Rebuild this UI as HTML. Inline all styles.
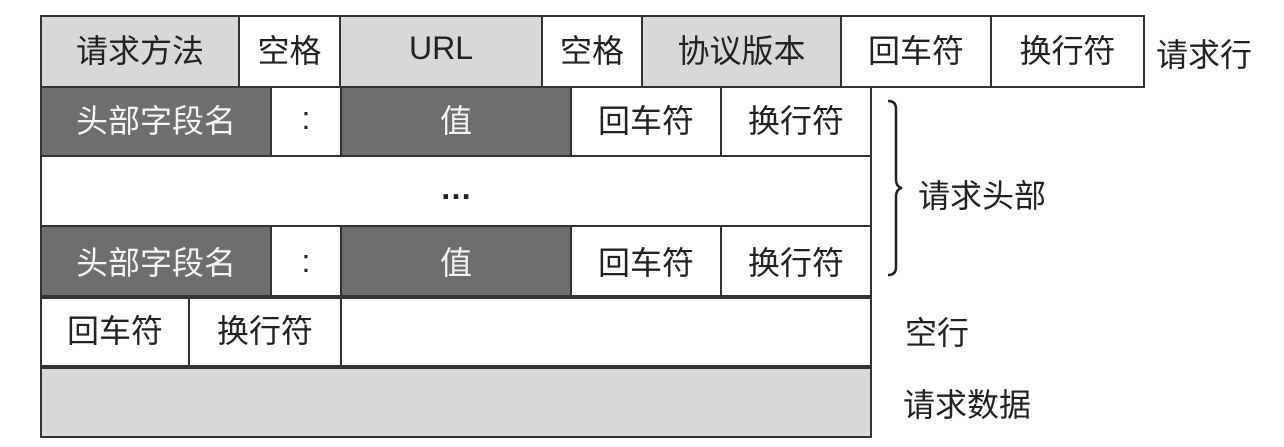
<!DOCTYPE html>
<html><head><meta charset="utf-8"><style>
body{margin:0;width:1284px;height:447px;background:#fff;position:relative;overflow:hidden;font-family:"Liberation Sans","Noto Sans CJK SC",sans-serif;color:#222}
.c{position:absolute;box-sizing:border-box;border:2px solid #333;display:flex;align-items:center;justify-content:center;font-size:32px;background:#fff;padding-bottom:6px}
.l{background:#d8d8d8}
.d{background:#6e6e6e;color:#f4f4f4}
.t{position:absolute;font-size:32px}
</style></head><body>
<div class="c l" style="left:40px;top:15px;width:200px;height:73px">请求方法</div>
<div class="c" style="left:238px;top:15px;width:103px;height:73px">空格</div>
<div class="c l" style="left:339px;top:15px;width:204px;height:73px">URL</div>
<div class="c" style="left:541px;top:15px;width:102px;height:73px">空格</div>
<div class="c l" style="left:641px;top:15px;width:201px;height:73px">协议版本</div>
<div class="c" style="left:840px;top:15px;width:152px;height:73px">回车符</div>
<div class="c" style="left:990px;top:15px;width:155px;height:73px">换行符</div>
<div class="t" style="left:1156px;top:30px">请求行</div>

<div class="c d" style="left:40px;top:86px;width:232px;height:71px">头部字段名</div>
<div class="c" style="left:270px;top:86px;width:72px;height:71px">:</div>
<div class="c d" style="left:340px;top:86px;width:232px;height:71px">值</div>
<div class="c" style="left:570px;top:86px;width:152px;height:71px">回车符</div>
<div class="c" style="left:720px;top:86px;width:152px;height:71px">换行符</div>

<div class="c" style="left:40px;top:155px;width:832px;height:72px;font-weight:bold">…</div>

<div class="c d" style="left:40px;top:225px;width:232px;height:72px;padding-bottom:0">头部字段名</div>
<div class="c" style="left:270px;top:225px;width:72px;height:72px;padding-bottom:0">:</div>
<div class="c d" style="left:340px;top:225px;width:232px;height:72px;padding-bottom:0">值</div>
<div class="c" style="left:570px;top:225px;width:152px;height:72px;padding-bottom:0">回车符</div>
<div class="c" style="left:720px;top:225px;width:152px;height:72px;padding-bottom:0">换行符</div>

<div class="c" style="left:40px;top:297px;width:150px;height:70px">回车符</div>
<div class="c" style="left:188px;top:297px;width:154px;height:70px">换行符</div>
<div class="c" style="left:340px;top:297px;width:532px;height:70px"></div>
<div class="t" style="left:905px;top:308px">空行</div>

<div class="c l" style="left:40px;top:367px;width:832px;height:71px"></div>
<div class="t" style="left:903px;top:380px">请求数据</div>

<svg style="position:absolute;left:880px;top:95px" width="40" height="190"><path d="M8 6 Q16 6 16 14 L16 84 Q16 92 22 93 Q16 94 16 102 L16 172 Q16 180 8 180" fill="none" stroke="#222" stroke-width="2.5"/></svg>
<div class="t" style="left:918px;top:171px">请求头部</div>
</body></html>
